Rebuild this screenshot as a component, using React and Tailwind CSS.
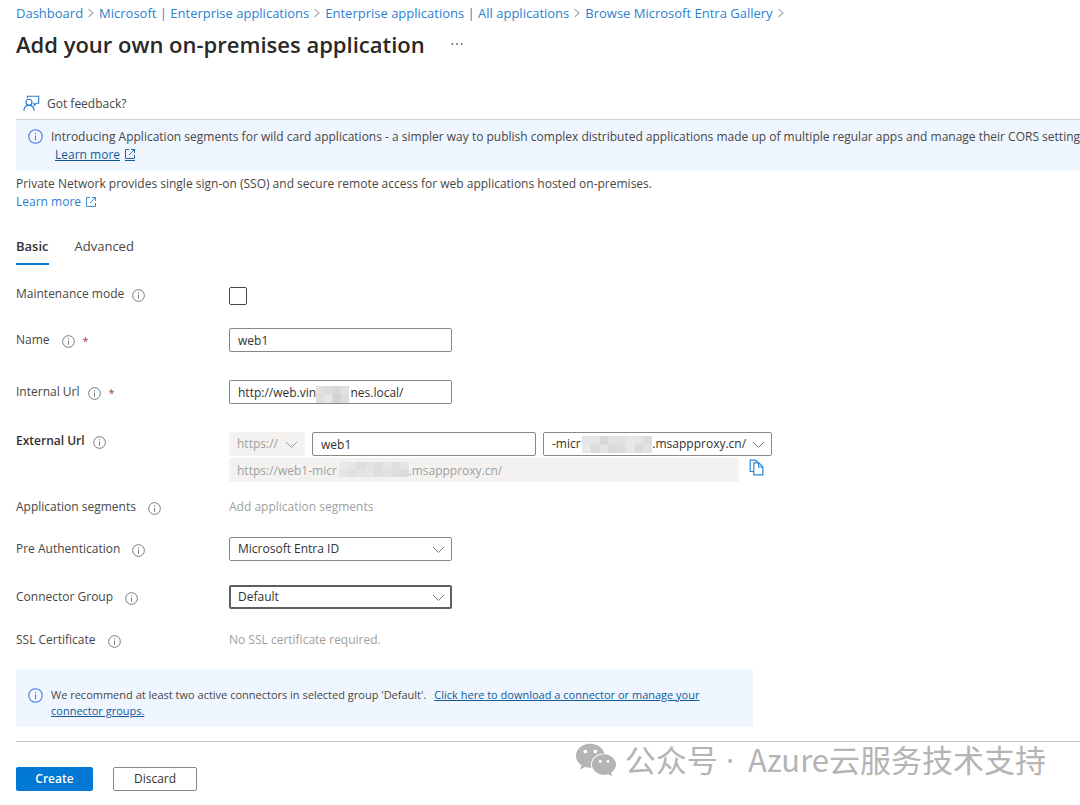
import React, { useState } from "react";
import { FaWeixin } from "react-icons/fa";

const NB = "\u00a0";

function Crumb({ children }) {
  return (
    <li className="flex items-center">
      <a href="#" className="text-[#2b7fd0] hover:underline">{children}</a>
      <svg className="mx-1" width="8" height="10" viewBox="0 0 8 10" fill="none" stroke="#a3a3a3" strokeWidth="1.1" aria-hidden="true">
        <path d="M1.5 .8 6 5 1.5 9.2" />
      </svg>
    </li>
  );
}

function InfoIcon({ size = 13, color = "#6b6b6b" }) {
  return (
    <svg className="shrink-0" width={size} height={size} viewBox="0 0 16 16" fill="none" stroke={color} strokeWidth="1.1" aria-hidden="true">
      <circle cx="8" cy="8" r="7.2" />
      <path d="M8 7v5" />
      <path d="M8 4v1.5" />
    </svg>
  );
}

function ExternalIcon() {
  return (
    <svg className="inline-block" width="10" height="10" viewBox="0 0 10 10" fill="none" stroke="currentColor" strokeWidth=".9" aria-hidden="true">
      <path d="M4 .5H.5v9h9V6" />
      <path d="M6 .5h3.5V4M9.5 .5 4 6" />
    </svg>
  );
}

function FeedbackIcon() {
  return (
    <svg width="17" height="17" viewBox="0 0 17 17" fill="none" stroke="#2b7cd3" strokeWidth="1.1" aria-hidden="true">
      <path d="M4.5 3.2V1.3h11.2v7h-2.3l-2.2 2.2V8.3h-1" />
      <circle cx="6" cy="7.3" r="3" />
      <path d="M.8 15.8c.3-3.2 2.3-5.4 5.2-5.4s4.9 2.2 5.2 5.4" />
    </svg>
  );
}

function CopyIcon() {
  return (
    <svg width="15" height="17" viewBox="0 0 15 17" fill="none" stroke="#2b85d8" strokeWidth="1.2" aria-hidden="true">
      <path d="M4.5 12.5H1.2V1.2h5.3l3 2.8" />
      <path d="M4.8 3.8h5l4 4v8h-9z" />
      <path d="M9.6 4v4h4" />
    </svg>
  );
}

function Chevron({ color = "#777" }) {
  return (
    <svg className="pointer-events-none absolute right-[7px] top-[9px]" width="13" height="8" viewBox="0 0 13 8" fill="none" stroke={color} strokeWidth="1" aria-hidden="true">
      <path d="M1 1l5.5 5.5L12 1" />
    </svg>
  );
}

function Mosaic({ className, rows }) {
  const w = rows[0].length * 10;
  return (
    <svg className={className} viewBox={`0 0 ${w} ${rows.length * 9}`} preserveAspectRatio="none" aria-hidden="true">
      {rows.map((row, y) =>
        row.map((c, x) => <rect key={`${x}-${y}`} x={x * 10} y={y * 9} width="10.5" height="9.5" fill={c} />)
      )}
    </svg>
  );
}

function Row({ label, id, bold, wide, top, required, className, children }) {
  return (
    <div className={`grid grid-cols-[213px_1fr] ${top ? "items-start" : "items-center"} ${className}`}>
      <div className={`flex items-center ${wide ? "gap-3" : "gap-2"}`}>
        {id ? (
          <label htmlFor={id} className={bold ? "font-semibold text-[#323130]" : ""}>{label}</label>
        ) : (
          <span>{label}</span>
        )}
        <span className="flex items-start gap-2 pt-[3px]">
          <InfoIcon />
          {required && <span className="text-[11px] leading-[11px] text-[#a4404a]">*</span>}
        </span>
      </div>
      {children}
    </div>
  );
}

const field = "block h-6 w-full appearance-none rounded-xs border border-[#8a8886] bg-white px-2 text-[#323130] outline-none";
const disabledField = "block h-6 w-full appearance-none rounded-xs bg-[#f3f2f1] px-2 text-[#a19f9d] opacity-100 outline-none";

export default function App() {
  const [name, setName] = useState("web1");
  const [internal, setInternal] = useState("http://web.vin" + NB.repeat(11) + "nes.local/");
  const [host, setHost] = useState("web1");
  const domain = "-micr" + NB.repeat(23) + ".msappproxy.cn/";

  return (
    <main className="relative min-h-screen overflow-x-hidden bg-white pl-4 pt-1 font-['Open_Sans','Noto_Sans_CJK_SC',sans-serif] text-[12px] leading-[18px] text-[#484644]">
      <nav aria-label="Breadcrumb" className="text-[13px]">
        <ol className="flex whitespace-nowrap">
          <Crumb>Dashboard</Crumb>
          <Crumb>Microsoft | Enterprise applications</Crumb>
          <Crumb>Enterprise applications | All applications</Crumb>
          <Crumb>Browse Microsoft Entra Gallery</Crumb>
        </ol>
      </nav>

      <header className="mt-[6px] flex items-center gap-[26px]">
        <h1 className="text-[22px] font-semibold leading-[32px] text-[#292827]">Add your own on-premises application</h1>
        <button type="button" aria-label="More actions">
          <svg width="12" height="4" viewBox="0 0 12 4" fill="#605e5c" aria-hidden="true">
            <circle cx="1.3" cy="2" r=".9" />
            <circle cx="6" cy="2" r=".9" />
            <circle cx="10.7" cy="2" r=".9" />
          </svg>
        </button>
      </header>

      <button type="button" className="ml-[7px] mt-[35px] flex h-[18px] items-start gap-[7px]">
        <FeedbackIcon />
        Got feedback?
      </button>

      <section className="mt-[6px] flex h-[52px] gap-2 border-t border-[#d2d0ce] bg-[#eff6ff] pl-3 pt-2">
        <span className="pt-[1px]"><InfoIcon size={15} color="#3b78d8" /></span>
        <div className="whitespace-nowrap">
          <p>Introducing Application segments for wild card applications - a simpler way to publish complex distributed applications made up of multiple regular apps and manage their CORS settings.</p>
          <a href="#" className="ml-1 inline-flex items-center gap-[5px] text-[#0f5b99]">
            <span className="underline">Learn more</span>
            <span className="flex border-b border-current pb-[1px]"><ExternalIcon /></span>
          </a>
        </div>
      </section>

      <p className="mt-1">Private Network provides single sign-on (SSO) and secure remote access for web applications hosted on-premises.</p>
      <a href="#" className="flex w-fit items-center gap-[5px] text-[#2b7fd0]">
        Learn more <ExternalIcon />
      </a>

      <div role="tablist" className="mt-[26px] flex h-7 items-stretch gap-[26px] text-[13px]">
        <button type="button" role="tab" aria-selected="true" className="flex border-b-2 border-[#0078d4] font-semibold text-[#323130]">Basic</button>
        <button type="button" role="tab" aria-selected="false" className="flex">Advanced</button>
      </div>

      <form onSubmit={(e) => e.preventDefault()}>
        <Row id="maintenance" label="Maintenance mode" top className="mt-5 h-5">
          <input id="maintenance" type="checkbox" className="mt-[2px] block size-[18px] appearance-none rounded-xs border border-[#484644] bg-white checked:bg-[#0078d4]" />
        </Row>

        <Row id="name" label="Name" wide required className="mt-[23px]">
          <input id="name" className={`${field} max-w-[223px]`} value={name} onChange={(e) => setName(e.target.value)} />
        </Row>

        <Row id="internal" label="Internal Url" required className="mt-7">
          <div className="relative max-w-[223px]">
            <input id="internal" className={field} value={internal} onChange={(e) => setInternal(e.target.value)} />
            <Mosaic
              className="absolute left-[87px] top-[6px] h-[17px] w-[33px]"
              rows={[
                ["#e3dfe0", "#dcdadb", "#d9d8d9", "#e2e1e2"],
                ["#dedcdc", "#e5e4e6", "#d3d1d3", "#dddbdc"],
              ]}
            />
          </div>
        </Row>

        <Row id="external" label="External Url" bold top className="mt-7">
          <div className="flex gap-[7px]">
            <div className="relative w-[76px]">
              <select aria-label="Protocol" disabled className={disabledField}>
                <option>https://</option>
              </select>
              <Chevron color="#a19f9d" />
            </div>
            <input id="external" className={`${field} max-w-[224px]`} value={host} onChange={(e) => setHost(e.target.value)} />
            <div className="relative w-[229px]">
              <select aria-label="Domain" className={field}>
                <option>{domain}</option>
              </select>
              <Chevron />
              <Mosaic
                className="absolute left-[39px] top-[4px] h-[17px] w-[70px]"
                rows={[
                  ["#e6e4e4", "#e5e5e6", "#d6d9db", "#e2e4e4", "#e1e2df", "#e6e7e7", "#e5e4e6", "#dfdadd"],
                  ["#e9e9e8", "#dedada", "#e5e4e6", "#d9d9dc", "#dcdcd8", "#e8e6e9", "#dcd9dc", "#e3e2e1"],
                ]}
              />
            </div>
          </div>
        </Row>

        <div className="mt-[2px] flex items-center gap-[10px] pl-[213px]">
          <div className="relative w-[510px]">
            <input aria-label="Full external URL" disabled className={disabledField} value={"https://" + host + domain} />
            <Mosaic
              className="absolute left-[110px] top-[4px] h-[15px] w-[70px]"
              rows={[
                ["#e9e8e8", "#e6e5e5", "#dddddd", "#e4e3e3", "#dedede", "#e6e5e5", "#dfdfdf", "#e5e5e5"],
                ["#e4e4e4", "#dfdfdf", "#e3e3e3", "#e5e5e4", "#dedede", "#e2e2e2", "#dedddd", "#dcdcdc"],
              ]}
            />
          </div>
          <button type="button" aria-label="Copy to clipboard" className="pb-[6px]"><CopyIcon /></button>
        </div>

        <Row label="Application segments" wide className="mt-4">
          <span className="text-[#a19f9d]">Add application segments</span>
        </Row>

        <Row id="preauth" label="Pre Authentication" wide className="mt-[21px]">
          <div className="relative max-w-[223px]">
            <select id="preauth" className={field}>
              <option>Microsoft Entra ID</option>
              <option>Passthrough</option>
            </select>
            <Chevron />
          </div>
        </Row>

        <Row id="group" label="Connector Group" wide className="mt-6">
          <div className="relative max-w-[223px]">
            <select id="group" className="block h-6 w-full appearance-none rounded-xs border-2 border-[#605e5c] bg-white px-[7px] text-[#323130] outline-none">
              <option>Default</option>
            </select>
            <Chevron />
          </div>
        </Row>

        <Row label="SSL Certificate" wide className="mt-[22px]">
          <span className="text-[#a19f9d]">No SSL certificate required.</span>
        </Row>

        <section className="mt-5 flex max-w-[737px] gap-2 bg-[#eff6ff] pb-2 pl-3 pr-10 pt-[18px] text-[11px] leading-[16px]">
          <span className="pt-[1px]"><InfoIcon size={15} color="#3b78d8" /></span>
          <p>
            We recommend at least two active connectors in selected group 'Default'.
            <a href="#" className="ml-2 text-[#0f5b99] underline">Click here to download a connector or manage your connector groups.</a>
          </p>
        </section>

        <footer className="relative mt-[14px] flex gap-5 border-t border-[#c8c6c4] pb-3 pt-[25px]">
          <button type="submit" className="h-6 w-[77px] rounded-xs bg-[#0078d4] font-semibold text-white">Create</button>
          <button type="button" className="h-6 w-[84px] rounded-xs border border-[#8a8886] bg-white text-[#323130]">Discard</button>
          <div className="absolute right-[34px] top-0 flex items-start gap-2 whitespace-nowrap font-['Noto_Sans_CJK_SC',sans-serif] text-[31px] leading-[34px] text-[#b4b4b4]">
            <FaWeixin size={42} className="-mt-[3px]" aria-hidden="true" />
            <span>公众号<span className="pr-[6px] font-['Open_Sans',sans-serif]"> · </span>Azure云服务技术支持</span>
          </div>
        </footer>
      </form>
    </main>
  );
}
